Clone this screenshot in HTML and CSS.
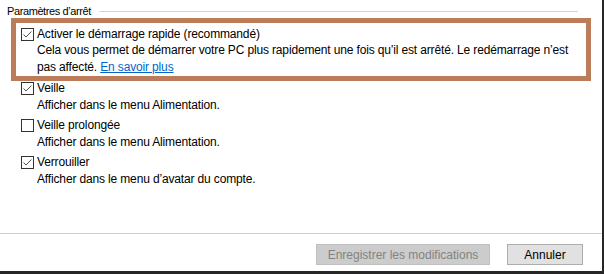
FILE: index.html
```html
<!DOCTYPE html>
<html>
  <head>
    <title>Options d'alimentation</title>
    <link rel="stylesheet" href="styles.css">
  </head>
  <body>
    <div class="window">
      <div class="settings">

        <div class="groupTitle">
          <span class="groupName">Paramètres d’arrêt</span>
          <div class="groupLine"></div>
        </div>

        <div class="highlightBox">
          <div class="option">
            <div class="optionLabel">
              <svg class="checkBox" width="13" height="13" viewBox="0 0 13 13">
                <rect x="0.5" y="0.5" width="12" height="12" fill="#fff" stroke="#333"/>
                <polyline points="2.5,6.5 5,9 10.5,3.5" fill="none" stroke="#555" stroke-width="1"/>
              </svg>
              <span>Activer le démarrage rapide (recommandé)</span>
            </div>
            <div class="optionDesc firstDesc">
              Cela vous permet de démarrer votre PC plus rapidement une fois qu’il est arrêté. Le redémarrage n’est<br>
              pas affecté. <a class="learnMore" href="#">En savoir plus</a>
            </div>
          </div>
        </div>

        <div class="option">
          <div class="optionLabel">
            <svg class="checkBox" width="13" height="13" viewBox="0 0 13 13">
              <rect x="0.5" y="0.5" width="12" height="12" fill="#fff" stroke="#333"/>
              <polyline points="2.5,6.5 5,9 10.5,3.5" fill="none" stroke="#555" stroke-width="1"/>
            </svg>
            <span>Veille</span>
          </div>
          <div class="optionDesc">Afficher dans le menu Alimentation.</div>
        </div>

        <div class="option">
          <div class="optionLabel">
            <svg class="checkBox" width="13" height="13" viewBox="0 0 13 13">
              <rect x="0.5" y="0.5" width="12" height="12" fill="#fff" stroke="#333"/>
            </svg>
            <span>Veille prolongée</span>
          </div>
          <div class="optionDesc">Afficher dans le menu Alimentation.</div>
        </div>

        <div class="option">
          <div class="optionLabel">
            <svg class="checkBox" width="13" height="13" viewBox="0 0 13 13">
              <rect x="0.5" y="0.5" width="12" height="12" fill="#fff" stroke="#333"/>
              <polyline points="2.5,6.5 5,9 10.5,3.5" fill="none" stroke="#555" stroke-width="1"/>
            </svg>
            <span>Verrouiller</span>
          </div>
          <div class="optionDesc">Afficher dans le menu d’avatar du compte.</div>
        </div>

      </div>

      <div class="footer">
        <button class="saveButton" disabled>Enregistrer les modifications</button>
        <button class="cancelButton">Annuler</button>
      </div>
    </div>
  </body>
</html>
```
FILE: styles.css
```css
body {
  margin: 0;
  background-color: white;
  font-family: "Liberation Sans", Arial, sans-serif;
  font-size: 12px;
  letter-spacing: -0.15px;
  color: black;
}

.window {
  width: 604px;
  height: 274px;
  box-sizing: border-box;
  border-right: 2px solid #262626;
  border-bottom: 3px solid #262626;
  display: flex;
  flex-direction: column;
}

.settings {
  flex: 1;
  padding-top: 4px;
}

/* title with the grey rule after it */
.groupTitle {
  display: flex;
  align-items: center;
  height: 14px;
  padding-left: 7px;
  padding-right: 24px;
}

.groupName {
  font-size: 11px;
  letter-spacing: -0.4px;
  line-height: 14px;
}

.groupLine {
  flex: 1;
  height: 1px;
  background-color: #d5d5d5;
  margin-left: 8px;
  margin-top: 1px;
}

/* brown frame round the first option */
.highlightBox {
  width: 580px;
  height: 63px;
  box-sizing: border-box;
  margin-left: 11px;
  border: 5px solid #bb7c5a;
  padding: 4px 0 0 5px;
}

.option {
  padding-left: 21px;
  margin-bottom: 4px;
}

.highlightBox .option {
  padding-left: 0;
  margin-bottom: 0;
}

.optionLabel {
  display: flex;
  align-items: flex-start;
  line-height: 15px;
}

.checkBox {
  margin-top: 1px;
  margin-right: 3px;
  flex-shrink: 0;
}

.optionDesc {
  padding-left: 16px;
  line-height: 18px;
}

.firstDesc {
  line-height: 17px;
  white-space: nowrap;
}

.learnMore {
  color: #0066cc;
}

/* bottom bar with the two buttons */
.footer {
  border-top: 1px solid #cfcfcf;
  height: 38px;
  display: flex;
  justify-content: flex-end;
  align-items: flex-start;
  gap: 17px;
  padding-top: 10px;
  padding-right: 19px;
  box-sizing: border-box;
}

.saveButton, .cancelButton {
  height: 21px;
  font-family: "Liberation Sans", Arial, sans-serif;
  font-size: 12px;
  letter-spacing: 0;
  padding: 0;
}

.saveButton {
  width: 174px;
  background-color: #cccccc;
  border: 1px solid #bfbfbf;
  color: #838383;
}

.cancelButton {
  width: 76px;
  background-color: #e1e1e1;
  border: 1px solid #adadad;
  color: black;
}
```
